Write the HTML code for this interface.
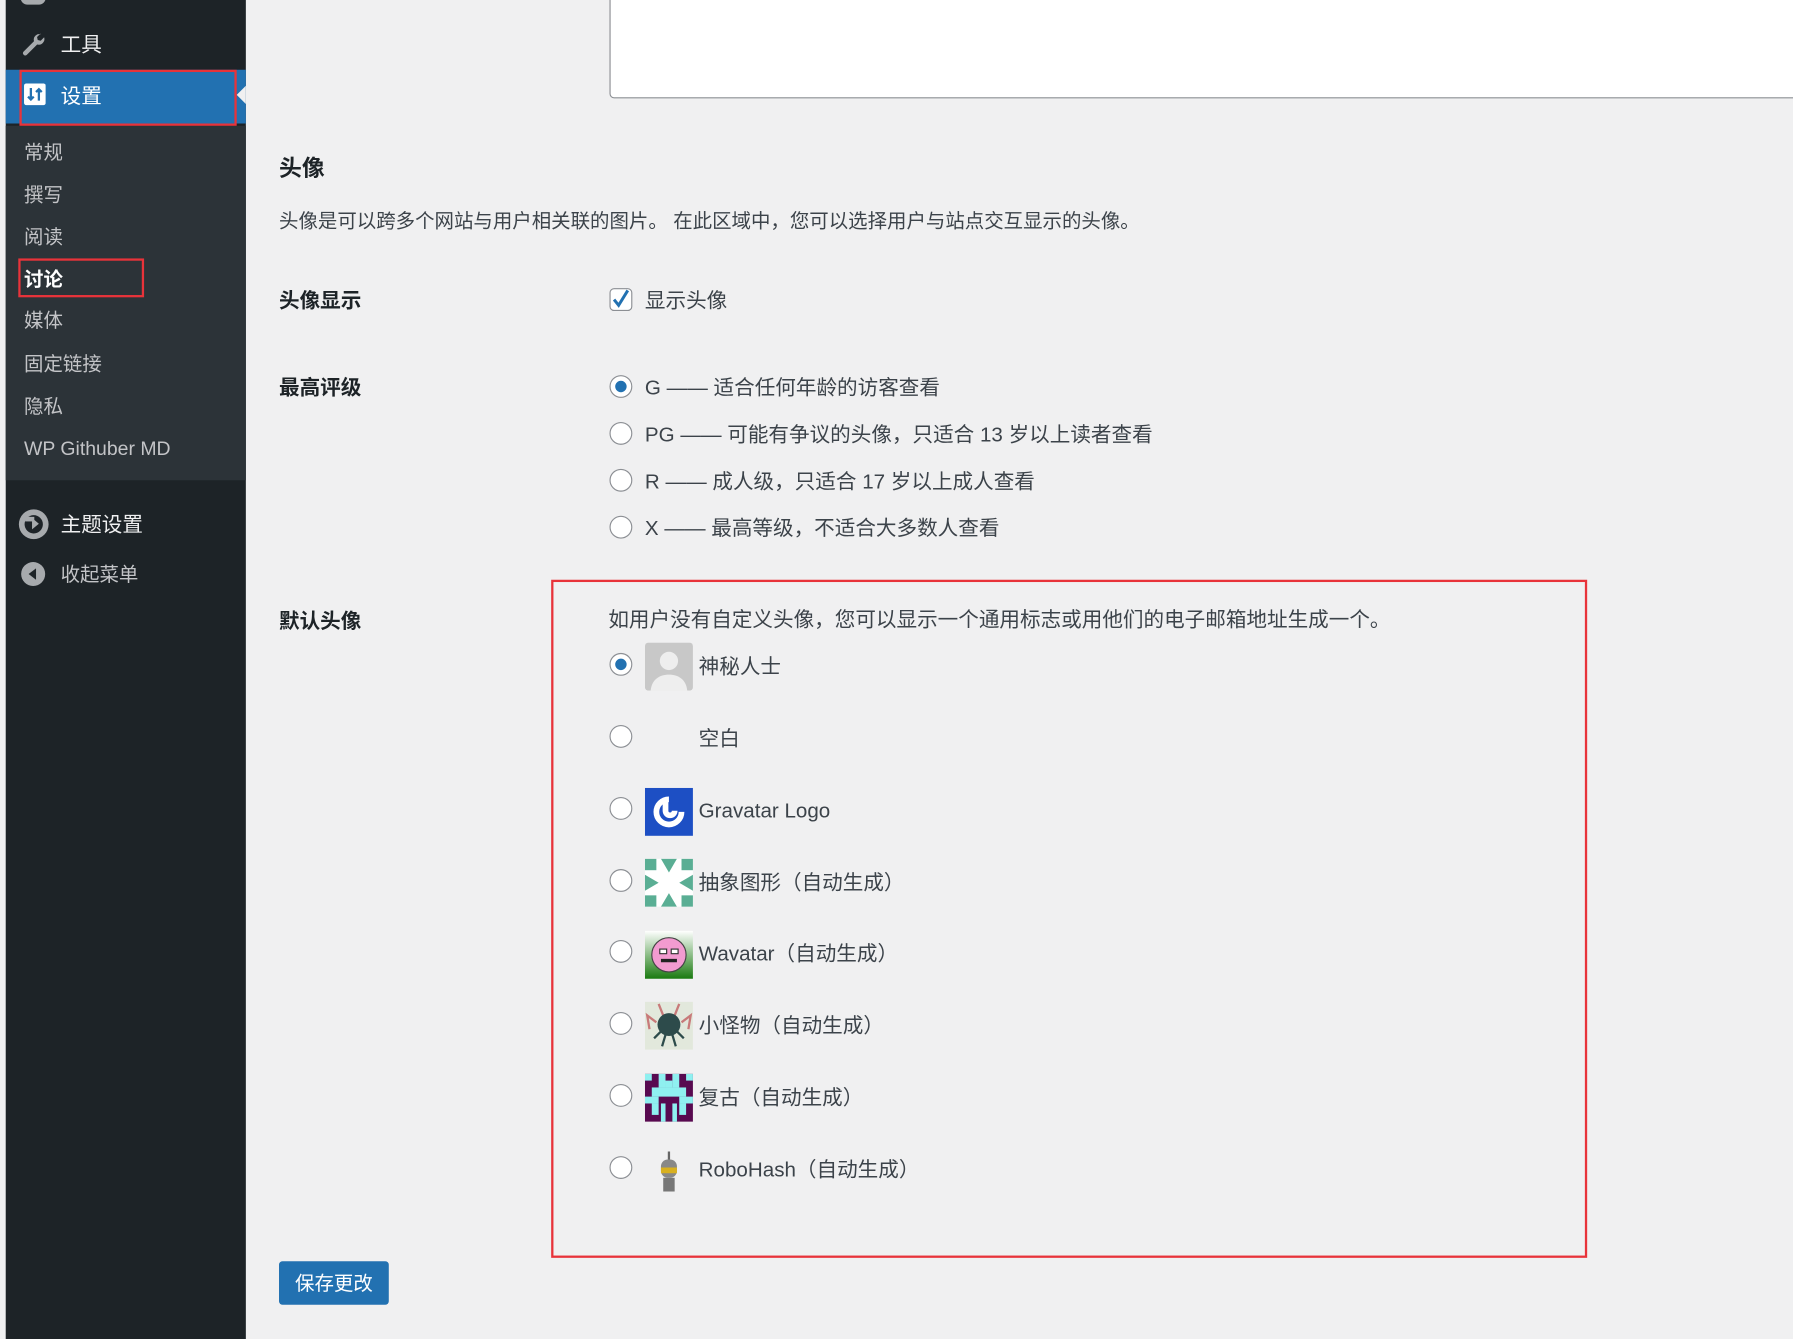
<!DOCTYPE html>
<html><head><meta charset="utf-8">
<style>
html,body{margin:0;padding:0;width:1793px;height:1339px;overflow:hidden;background:#f0f0f1}
#w{position:absolute;left:0;top:0;width:1568px;height:1171px;transform:scale(1.14349);transform-origin:0 0;background:#f0f0f1;font-family:"Liberation Sans","Noto Sans CJK SC",sans-serif;color:#1d2327;font-size:18px}
.a{position:absolute;white-space:nowrap;line-height:1}
#side{position:absolute;left:5px;top:0;width:210px;height:1171px;background:#1d2327}
#sub{position:absolute;left:5px;top:110px;width:210px;height:310px;background:#2c3338}
.si{position:absolute;left:21px;color:#c3c4c7;font-size:17px;line-height:1}
.red{position:absolute;border:2px solid #e8333a;box-sizing:border-box}
.rad{position:absolute;left:533px;width:20px;height:20px;border:1px solid #8c8f94;border-radius:50%;background:#fff;box-sizing:border-box}
.rad.on::after{content:"";position:absolute;left:4px;top:4px;width:10px;height:10px;border-radius:50%;background:#2271b1}
.lab{position:absolute;left:244px;font-weight:bold;font-size:18px;line-height:1}
.av{position:absolute;left:564px;width:42px;height:42px}
.t{position:absolute;white-space:nowrap;line-height:1;color:#3c434a;font-size:18px}
</style></head><body><div id="w">
<div id="side"></div>
<div id="sub"></div>
<div style="position:absolute;left:18px;top:-8px;width:22px;height:12px;border-radius:6px;background:#a7aaad"></div>
<svg class="a" style="left:17px;top:27px" width="24" height="24" viewBox="0 0 24 24"><path d="M19 3a5 5 0 0 0-6.3 6.1L3.5 18.3a2 2 0 0 0 2.8 2.8l9.2-9.2A5 5 0 0 0 21.6 5.6l-3 3-2.6-.6-.6-2.6 3-3z" fill="#a7aaad"/></svg>
<div class="a" style="left:53px;top:30px;color:#f0f0f1;font-size:18px">工具</div>
<div style="position:absolute;left:5px;top:61px;width:210px;height:47px;background:#2271b1"></div>
<svg class="a" style="left:21px;top:73px" width="19" height="19" viewBox="0 0 19 19"><rect width="19" height="19" rx="2" fill="#fff"/><path d="M6 4v10M3.5 11.5 6 14l2.5-2.5M13 15V5M10.5 7.5 13 5l2.5 2.5" stroke="#2271b1" stroke-width="2" fill="none"/></svg>
<div class="a" style="left:53px;top:75px;color:#fff;font-size:18px">设置</div>
<div style="position:absolute;left:207px;top:75px;width:0;height:0;border-top:8px solid transparent;border-bottom:8px solid transparent;border-right:8px solid #f0f0f1"></div>
<div class="red" style="left:17px;top:61px;width:190px;height:49px"></div>
<div class="si" style="top:125px">常规</div>
<div class="si" style="top:162px">撰写</div>
<div class="si" style="top:199px">阅读</div>
<div class="si" style="top:236px;color:#fff;font-weight:bold">讨论</div>
<div class="red" style="left:16px;top:226px;width:110px;height:34px"></div>
<div class="si" style="top:272px">媒体</div>
<div class="si" style="top:310px">固定链接</div>
<div class="si" style="top:347px">隐私</div>
<div class="si" style="top:384px">WP Githuber MD</div>
<svg class="a" style="left:16px;top:445px" width="27" height="27" viewBox="0 0 27 27"><circle cx="13.5" cy="13.5" r="13" fill="#a7aaad"/><circle cx="13.5" cy="13.5" r="8" fill="#1d2327"/><path d="M12 8v10l6-5z" fill="#a7aaad"/><rect x="6" y="7" width="8" height="4" fill="#a7aaad"/></svg>
<div class="a" style="left:53px;top:450px;color:#f0f0f1;font-size:18px">主题设置</div>
<svg class="a" style="left:18px;top:491px" width="22" height="22" viewBox="0 0 22 22"><circle cx="11" cy="11" r="10.5" fill="#a7aaad"/><path d="M13.5 6v10L7 11z" fill="#1d2327"/></svg>
<div class="a" style="left:53px;top:494px;color:#c3c4c7;font-size:17px">收起菜单</div>

<div style="position:absolute;left:533px;top:-5px;width:1100px;height:91px;background:#fff;border:1px solid #8c8f94;border-radius:4px;box-sizing:border-box"></div>
<div class="a" style="left:244px;top:138px;font-size:20px;font-weight:bold">头像</div>
<div class="t" style="left:244px;top:185px;font-size:17px">头像是可以跨多个网站与用户相关联的图片。 在此区域中，您可以选择用户与站点交互显示的头像。</div>
<div class="lab" style="top:254px">头像显示</div>
<div class="lab" style="top:330px">最高评级</div>
<div class="lab" style="top:534px">默认头像</div>
<div style="position:absolute;left:533px;top:252px;width:20px;height:20px;border:1px solid #8c8f94;border-radius:4px;background:#fff;box-sizing:border-box"></div>
<svg class="a" style="left:533px;top:250px" width="20" height="22" viewBox="0 0 20 22"><path d="M4 12l4 5 8-13" stroke="#2271b1" stroke-width="2.6" fill="none"/></svg>
<div class="t" style="left:564px;top:254px">显示头像</div>
<div class="rad on" style="top:328px"></div><div class="t" style="left:564px;top:330px">G —— 适合任何年龄的访客查看</div>
<div class="rad" style="top:369px"></div><div class="t" style="left:564px;top:371px">PG —— 可能有争议的头像，只适合 13 岁以上读者查看</div>
<div class="rad" style="top:410px"></div><div class="t" style="left:564px;top:412px">R —— 成人级，只适合 17 岁以上成人查看</div>
<div class="rad" style="top:451px"></div><div class="t" style="left:564px;top:453px">X —— 最高等级，不适合大多数人查看</div>

<div class="red" style="left:482px;top:507px;width:906px;height:593px"></div>
<div class="t" style="left:532px;top:533px">如用户没有自定义头像，您可以显示一个通用标志或用他们的电子邮箱地址生成一个。</div>

<div class="rad on" style="top:571px"></div>
<svg class="av" style="top:562px" viewBox="0 0 42 42"><rect width="42" height="42" rx="3" fill="#c8c8c8"/><circle cx="21" cy="16" r="8" fill="#eee"/><path d="M5 42c1-10 8-14 16-14s15 4 16 14z" fill="#eee"/></svg>
<div class="t" style="left:611px;top:574px">神秘人士</div>
<div class="rad" style="top:634px"></div><div class="t" style="left:611px;top:637px">空白</div>
<div class="rad" style="top:697px"></div>
<svg class="av" style="top:689px" viewBox="0 0 42 42"><rect width="42" height="42" fill="#1d4fc4"/><path d="M21 10a11 11 0 1 0 11 11" stroke="#fff" stroke-width="5" fill="none"/><path d="M18 12v8a4 4 0 0 0 8 0" stroke="#fff" stroke-width="5" fill="none"/></svg>
<div class="t" style="left:611px;top:700px">Gravatar Logo</div>
<div class="rad" style="top:760px"></div>
<svg class="av" style="top:751px" viewBox="0 0 42 42"><rect width="42" height="42" fill="#fff"/><g fill="#5aae94"><rect width="10" height="10"/><rect x="32" width="10" height="10"/><rect y="32" width="10" height="10"/><rect x="32" y="32" width="10" height="10"/><path d="M14 0h14l-7 12zM14 42h14l-7-12zM0 14v14l12-7zM42 14v14l-12-7z"/></g></svg>
<div class="t" style="left:611px;top:763px">抽象图形（自动生成）</div>
<div class="rad" style="top:822px"></div>
<svg class="av" style="top:814px" viewBox="0 0 42 42"><defs><linearGradient id="g" x1="0" y1="0" x2="0" y2="1"><stop offset="0" stop-color="#fff"/><stop offset="1" stop-color="#1a7a10"/></linearGradient></defs><rect width="42" height="42" fill="url(#g)"/><circle cx="21" cy="21" r="15" fill="#f29bd0" stroke="#444" stroke-width="1"/><rect x="13" y="16" width="6" height="4" fill="#fff" stroke="#333"/><rect x="23" y="16" width="6" height="4" fill="#fff" stroke="#333"/><path d="M14 26h14" stroke="#222" stroke-width="3"/></svg>
<div class="t" style="left:611px;top:825px">Wavatar（自动生成）</div>
<div class="rad" style="top:885px"></div>
<svg class="av" style="top:876px" viewBox="0 0 42 42"><rect width="42" height="42" fill="#e2e8dc"/><g stroke="#c87a7a" stroke-width="2" fill="none"><path d="M16 12 12 2M26 12l4-10M10 18 2 12 4 24M32 18l8-6-2 12"/></g><circle cx="21" cy="20" r="10" fill="#2d4b4b"/><g stroke="#2d4b4b" stroke-width="2"><path d="M14 26 8 32M28 26l6 6M18 29l-3 10M24 29l3 10"/></g></svg>
<div class="t" style="left:611px;top:888px">小怪物（自动生成）</div>
<div class="rad" style="top:948px"></div>
<svg class="av" style="top:939px" viewBox="0 0 42 42"><rect width="42" height="42" fill="#580a50"/><g fill="#8ff0f0"><rect x="0" y="0" width="6" height="6"/><rect x="36" y="0" width="6" height="6"/><rect x="12" y="0" width="6" height="12"/><rect x="24" y="0" width="6" height="12"/><rect x="6" y="12" width="30" height="8"/><rect x="18" y="6" width="6" height="6"/><rect x="0" y="20" width="12" height="6"/><rect x="30" y="20" width="12" height="6"/><rect x="6" y="26" width="6" height="10"/><rect x="30" y="26" width="6" height="10"/><rect x="14" y="26" width="4" height="16"/><rect x="24" y="26" width="4" height="16"/></g></svg>
<div class="t" style="left:611px;top:951px">复古（自动生成）</div>
<div class="rad" style="top:1011px"></div>
<svg class="av" style="top:1002px" viewBox="0 0 42 42"><rect x="14" y="12" width="14" height="16" rx="6" fill="#888"/><rect x="14" y="19" width="14" height="5" fill="#d8b020"/><rect x="16" y="28" width="10" height="12" fill="#777"/><path d="M21 5v7" stroke="#666" stroke-width="2"/></svg>
<div class="t" style="left:611px;top:1014px">RoboHash（自动生成）</div>

<div style="position:absolute;left:244px;top:1103px;width:96px;height:38px;background:#2271b1;border-radius:3px;color:#fff;font-size:17px;line-height:40px;text-align:center">保存更改</div>
</div></body></html>
